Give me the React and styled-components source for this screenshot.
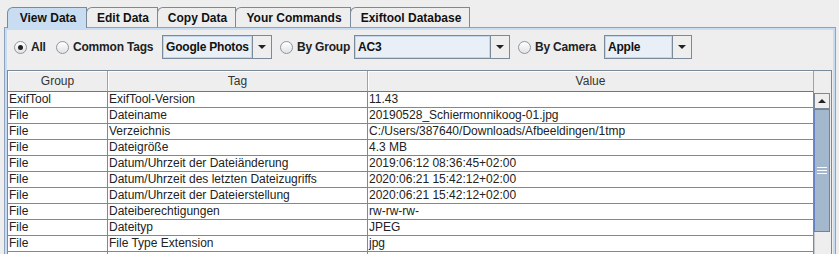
import React from "react";
import styled, { createGlobalStyle } from "styled-components";

const GlobalStyle = createGlobalStyle`
  html, body {
    margin: 0;
    background: #eeeeee;
  }
  body {
    font-family: "Liberation Sans", Arial, sans-serif;
    font-size: 12px;
    color: #222;
    overflow: hidden;
  }
`;

const tabs = [
  { label: "View Data", width: 80 },
  { label: "Edit Data", width: 72 },
  { label: "Copy Data", width: 79 },
  { label: "Your Commands", width: 116 },
  { label: "Exiftool Database", width: 120 },
];

const rows = [
  ["ExifTool", "ExifTool-Version", "11.43"],
  ["File", "Dateiname", "20190528_Schiermonnikoog-01.jpg"],
  ["File", "Verzeichnis", "C:/Users/387640/Downloads/Afbeeldingen/1tmp"],
  ["File", "Dateigröße", "4.3 MB"],
  ["File", "Datum/Uhrzeit der Dateiänderung", "2019:06:12 08:36:45+02:00"],
  ["File", "Datum/Uhrzeit des letzten Dateizugriffs", "2020:06:21 15:42:12+02:00"],
  ["File", "Datum/Uhrzeit der Dateierstellung", "2020:06:21 15:42:12+02:00"],
  ["File", "Dateiberechtigungen", "rw-rw-rw-"],
  ["File", "Dateityp", "JPEG"],
  ["File", "File Type Extension", "jpg"],
  ["", "", ""],
];

function App() {
  return (
    <>
      <GlobalStyle />
      <Window>
        <TabBar>
          {tabs.map((t, i) => (
            <Tab key={t.label} $active={i === 0} $width={t.width}>
              {t.label}
            </Tab>
          ))}
        </TabBar>
        <Panel>
          <Toolbar>
            <RadioOption $width={35}>
              <Radio $checked />
              All
            </RadioOption>
            <RadioOption $width={100}>
              <Radio />
              Common Tags
            </RadioOption>
            <Combo $width={110}>
              <ComboField>Google Photos</ComboField>
              <ComboArrow />
            </Combo>
            <RadioOption $width={68}>
              <Radio />
              By Group
            </RadioOption>
            <Combo $width={156}>
              <ComboField>AC3</ComboField>
              <ComboArrow />
            </Combo>
            <RadioOption $width={80}>
              <Radio />
              By Camera
            </RadioOption>
            <Combo $width={88}>
              <ComboField>Apple</ComboField>
              <ComboArrow />
            </Combo>
          </Toolbar>
          <ScrollPane>
            <HeaderRow>
              <HeaderCell>Group</HeaderCell>
              <HeaderCell>Tag</HeaderCell>
              <HeaderCell>Value</HeaderCell>
              <HeaderFiller />
            </HeaderRow>
            <Body>
              <Rows>
                {rows.map((r, i) => (
                  <Row key={i}>
                    {r.map((c, j) => (
                      <Cell key={j}>{c}</Cell>
                    ))}
                  </Row>
                ))}
              </Rows>
              <ScrollBar>
                <UpButton />
                <Thumb>
                  <Grip />
                </Thumb>
                <Track />
              </ScrollBar>
            </Body>
          </ScrollPane>
        </Panel>
      </Window>
    </>
  );
}

export default App;

const Window = styled.div`
  width: 839px;
  height: 254px;
  box-sizing: border-box;
  padding: 7px 3px 0 4px;
  overflow: hidden;
`;

const TabBar = styled.div`
  display: flex;
  align-items: flex-start;
  height: 20px;
  padding-left: 4px;
  position: relative;
  z-index: 1;
`;

const Tab = styled.div`
  box-sizing: border-box;
  width: ${(p) => p.$width}px;
  height: ${(p) => (p.$active ? "21px" : "20px")};
  margin-left: -1px;
  padding-left: 2px;
  display: flex;
  align-items: center;
  justify-content: center;
  font-weight: bold;
  color: #111;
  background: ${(p) => (p.$active ? "#c8ddf2" : "#eeeeee")};
  border: 1px solid #7a8a99;
  border-bottom: none;
  border-top-left-radius: 6px;
  white-space: nowrap;
`;

const Panel = styled.div`
  height: 240px;
  border: 1px solid #8da2be;
  border-bottom: none;
  box-shadow: inset 2px 2px 0 0 #c8ddf2, inset -2px 0 0 0 #c8ddf2;
  padding: 2px 3px 0 2px;
`;

const Toolbar = styled.div`
  display: flex;
  align-items: center;
  gap: 7px;
  height: 40px;
  box-sizing: border-box;
  padding: 5px 0 11px 6px;
  font-weight: bold;
  letter-spacing: -0.2px;
  color: #222;
`;

const RadioOption = styled.label`
  display: flex;
  align-items: center;
  gap: 4px;
  box-sizing: border-box;
  width: ${(p) => p.$width}px;
  flex-shrink: 0;
  padding-left: 1px;
  white-space: nowrap;
`;

const Radio = styled.span`
  width: 13px;
  height: 13px;
  flex-shrink: 0;
  box-sizing: border-box;
  border-radius: 50%;
  border: 1px solid #8a96a4;
  background: linear-gradient(#ffffff, #e2e2e2);
  display: inline-flex;
  align-items: center;
  justify-content: center;
  &::after {
    content: "";
    width: 5px;
    height: 5px;
    border-radius: 50%;
    background: #222;
    display: ${(p) => (p.$checked ? "block" : "none")};
  }
`;

const Combo = styled.div`
  display: flex;
  width: ${(p) => p.$width}px;
  height: 24px;
  flex-shrink: 0;
`;

const ComboField = styled.div`
  flex: 1;
  box-sizing: border-box;
  border: 1px solid #7a8a99;
  box-shadow: inset 0 0 0 1px #c4d6ea;
  background: #e8eff7;
  padding-left: 3px;
  display: flex;
  align-items: center;
  color: #111;
`;

const ComboArrow = styled.div`
  width: 19px;
  box-sizing: border-box;
  border: 1px solid #7a8a99;
  border-left: none;
  background: #eeeeee;
  display: flex;
  align-items: center;
  justify-content: center;
  &::after {
    content: "";
    border-left: 4px solid transparent;
    border-right: 4px solid transparent;
    border-top: 4px solid #222;
  }
`;

const ScrollPane = styled.div`
  width: 825px;
  box-sizing: border-box;
  border: 1px solid #7a8a99;
  border-bottom: none;
  background: #ffffff;
`;

const HeaderRow = styled.div`
  display: grid;
  grid-template-columns: 100px 260px 446px 17px;
  height: 21px;
  background: #eeeeee;
`;

const HeaderCell = styled.div`
  box-sizing: border-box;
  border-right: 1px solid #9aa4b0;
  border-bottom: 1px solid #6f7780;
  box-shadow: inset 1px 1px 0 #ffffff;
  display: flex;
  align-items: center;
  justify-content: center;
  color: #333;
`;

const HeaderFiller = styled.div`
  background: #eeeeee;
`;

const Body = styled.div`
  display: flex;
`;

const Rows = styled.div`
  width: 806px;
`;

const Row = styled.div`
  display: grid;
  grid-template-columns: 100px 260px 446px;
`;

const Cell = styled.div`
  box-sizing: border-box;
  height: 16px;
  line-height: 15px;
  padding-left: 1px;
  border-right: 1px solid #7a8a99;
  border-bottom: 1px solid #7a8a99;
  white-space: nowrap;
  overflow: hidden;
  color: #222;
`;

const ScrollBar = styled.div`
  width: 17px;
  box-sizing: border-box;
  padding-right: 1px;
  background: #eeeeee;
  display: flex;
  flex-direction: column;
`;

const UpButton = styled.div`
  height: 16px;
  margin-top: 1px;
  box-sizing: border-box;
  border: 1px solid #7a8a99;
  background: #eeeeee;
  display: flex;
  align-items: center;
  justify-content: center;
  &::after {
    content: "";
    border-left: 4px solid transparent;
    border-right: 4px solid transparent;
    border-bottom: 4px solid #222;
  }
`;

const Thumb = styled.div`
  height: 123px;
  box-sizing: border-box;
  border: 1px solid #6382bf;
  background: #a3b8cc;
  display: flex;
  align-items: center;
  justify-content: center;
`;

const Grip = styled.div`
  width: 10px;
  height: 5px;
  border-top: 1px solid #ffffff;
  border-bottom: 1px solid #ffffff;
  position: relative;
  &::after {
    content: "";
    position: absolute;
    left: 0;
    right: 0;
    top: 2px;
    border-top: 1px solid #ffffff;
  }
`;

const Track = styled.div`
  flex: 1;
  border-left: 1px solid #c4c9d0;
  background: #eeeeee;
`;
